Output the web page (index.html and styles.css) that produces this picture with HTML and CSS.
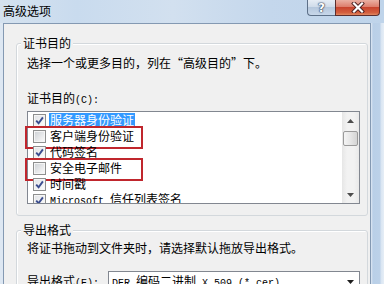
FILE: index.html
```html
<!DOCTYPE html>
<html lang="zh-CN">
<head>
<meta charset="utf-8">
<title>高级选项</title>
<link rel="stylesheet" href="styles.css">
</head>
<body>
<div class="titlebar">
  <span class="title">高级选项</span>
  <div class="caption">
    <div class="cbtn help">?</div>
    <div class="cbtn close">
      <svg width="14" height="11" viewBox="0 0 14 11">
        <path d="M3 1.5 L11 9.5 M11 1.5 L3 9.5" stroke="#4a2020" stroke-width="4" stroke-linecap="square"/>
        <path d="M3 1.5 L11 9.5 M11 1.5 L3 9.5" stroke="#fff" stroke-width="2.2" stroke-linecap="square"/>
      </svg>
    </div>
  </div>
</div>
<div class="frame">
  <div class="edge-left"></div>
  <div class="client">
    <fieldset class="group g1">
      <legend>证书目的</legend>
      <p class="desc">选择一个或更多目的，列在“高级目的”下。</p>
      <p class="label">证书目的<span class="lat">(<u>C</u>):</span></p>
      <div class="listbox">
        <div class="items">
          <div class="row"><span class="cb on"><svg viewBox="0 0 9 9" width="9" height="9"><path d="M1.2 4.6 L3.6 7.2 L7.9 1.4" fill="none" stroke="#3b4d8f" stroke-width="1.9"/></svg></span><span class="txt sel">服务器身份验证</span></div>
          <div class="row marked"><span class="cb"></span><span class="txt">客户端身份验证</span></div>
          <div class="row"><span class="cb on"><svg viewBox="0 0 9 9" width="9" height="9"><path d="M1.2 4.6 L3.6 7.2 L7.9 1.4" fill="none" stroke="#3b4d8f" stroke-width="1.9"/></svg></span><span class="txt">代码签名</span></div>
          <div class="row marked"><span class="cb"></span><span class="txt">安全电子邮件</span></div>
          <div class="row"><span class="cb on"><svg viewBox="0 0 9 9" width="9" height="9"><path d="M1.2 4.6 L3.6 7.2 L7.9 1.4" fill="none" stroke="#3b4d8f" stroke-width="1.9"/></svg></span><span class="txt">时间戳</span></div>
          <div class="row"><span class="cb on"><svg viewBox="0 0 9 9" width="9" height="9"><path d="M1.2 4.6 L3.6 7.2 L7.9 1.4" fill="none" stroke="#3b4d8f" stroke-width="1.9"/></svg></span><span class="txt"><span class="lat">Microsoft </span>信任列表签名</span></div>
        </div>
        <div class="vscroll">
          <div class="sbtn"><svg width="7" height="4" viewBox="0 0 7 4"><path d="M0 4 L3.5 0 L7 4 Z" fill="#4d4d4d"/></svg></div>
          <div class="thumb"></div>
          <div class="track"></div>
          <div class="sbtn"><svg width="7" height="4" viewBox="0 0 7 4"><path d="M0 0 L7 0 L3.5 4 Z" fill="#4d4d4d"/></svg></div>
        </div>
      </div>
    </fieldset>
    <fieldset class="group g2">
      <legend>导出格式</legend>
      <p class="desc2">将证书拖动到文件夹时，请选择默认拖放导出格式。</p>
      <div class="fmt-row">
        <span class="label2">导出格式<span class="lat">(<u>E</u>):</span></span>
        <div class="combo">
          <span class="ctext"><span class="lat">DER </span>编码二进制<span class="lat"> X.509 (*.cer)</span></span>
          <svg class="carrow" width="7" height="4" viewBox="0 0 7 4"><path d="M0 0 L7 0 L3.5 4 Z" fill="#1e1e1e"/></svg>
        </div>
      </div>
    </fieldset>
  </div>
  <div class="edge-right"></div>
</div>
</body>
</html>
```

FILE: styles.css
```css
* { box-sizing: border-box; }
html, body { margin: 0; padding: 0; }
body {
  width: 384px;
  height: 284px;
  overflow: hidden;
  background: #c6d8ec;
  font: 12px/14px "Noto Sans CJK SC", sans-serif;
  color: #000;
}
p { margin: 0; }
u { text-decoration: none; }

.titlebar {
  height: 23px;
  display: flex;
  justify-content: space-between;
  align-items: flex-start;
  background: linear-gradient(90deg, #d5e2ef 0%, #c9dbee 20%, #d2e0ef 45%, #c4d7ec 70%, #bfd4ea 100%);
}
.title { padding: 4px 0 0 3px; line-height: 14px; color: #000; }
.caption { display: flex; margin-right: 4px; }
.cbtn { height: 16px; display: flex; align-items: center; justify-content: center; }
.help {
  width: 28px;
  border: 1px solid #5d7088;
  border-top: none;
  border-right: none;
  border-radius: 0 0 0 4px;
  background: linear-gradient(#e6edf5, #d0dcea 45%, #b6c8dd 50%, #c7d7ea);
  color: #fff;
  font: bold 12px/14px "DejaVu Sans", sans-serif;
  text-shadow: 0 0 1px #2b3d58, 0 0 1px #2b3d58, 0 0 2px #2b3d58;
}
.close {
  width: 45px;
  border: 1px solid #5b2d2d;
  border-top: none;
  border-radius: 0 0 4px 0;
  background: linear-gradient(#eab0a3, #dd7e6c 45%, #c8442e 50%, #d4603f 85%, #e08a62);
}

.frame { display: flex; height: 261px; }
.edge-left { width: 3px; background: #dde7f2; }
.edge-right {
  flex: 1;
  background: linear-gradient(90deg, #dfe8f3 0, #b9cfe7 2px, #bcd1e8 9px, #d9e5f2 10px, #e6eef6 13px);
}
.client {
  width: 368px;
  border: 1px solid #8499b2;
  border-bottom: none;
  background: #f0f0f0;
  padding: 12px 2px 0 12px;
}

.group {
  margin: 0;
  min-width: 0;
  border: 1px solid #d3d8dc;
  border-radius: 3px;
  box-shadow: inset 1px 1px 0 #fff;
  padding: 0 7px 11px 4px;
}
.group legend {
  padding: 0 2px;
  line-height: 14px;
  background: #f0f0f0;
}
.g2 { margin-top: 7px; padding-bottom: 20px; }

.desc { margin: 6px 0 0 6px; }
.label { margin: 21px 0 0 6px; }
.lat { font-family: "Liberation Mono", monospace; font-size: 10px; }

.listbox {
  margin: 3px 0 0 6px;
  width: 333px;
  height: 93px;
  border: 1px solid #828790;
  background: #fff;
  display: flex;
}
.items {
  flex: 1;
  padding-left: 5px;
  overflow-x: visible;
  overflow-y: clip;
}
.row {
  position: relative;
  height: 16px;
  display: flex;
  align-items: center;
  gap: 3px;
}
.row.marked::after {
  content: "";
  position: absolute;
  left: -8px;
  top: -2px;
  width: 114px;
  height: 19px;
  border: 2px solid #c0262d;
}
.cb {
  width: 13px;
  height: 13px;
  flex: none;
  border: 1px solid #8e8f8f;
  padding: 1px;
  background: linear-gradient(135deg, #d1d4d8, #f8f8f8) content-box, #f5f5f5;
  box-shadow: inset 0 0 0 1px #f5f5f5;
  display: flex;
  align-items: center;
  justify-content: center;
}
.cb.on { background: linear-gradient(135deg, #e3e5e8, #fafafa) content-box, #f5f5f5; }
.cb svg { display: block; }
.txt { padding: 0 1px; line-height: 14px; white-space: nowrap; }
.txt.sel { background: #3399ff; color: #fff; }

.vscroll {
  width: 17px;
  flex: none;
  display: flex;
  flex-direction: column;
  background: linear-gradient(90deg, #e6e6e6, #f2f2f2 30%, #f2f2f2 70%, #e9e9e9);
}
.sbtn { height: 17px; display: flex; align-items: center; justify-content: center; }
.thumb {
  margin: 2px 1px 0;
  height: 15px;
  border: 1px solid #9a9a9a;
  border-radius: 2px;
  background: linear-gradient(90deg, #f4f4f4, #e6e6e6 50%, #d4d4d4);
}
.track { flex: 1; }

.desc2 { margin: 4px 0 0 6px; }
.fmt-row {
  margin: 16px 0 0 6px;
  display: flex;
  justify-content: space-between;
  align-items: flex-start;
}
.label2 { margin-top: 3px; }
.combo {
  width: 252px;
  height: 22px;
  border: 1px solid #828790;
  background: #fff;
  display: flex;
  align-items: center;
  padding: 0 5px 0 3px;
}
.ctext { white-space: nowrap; }
.carrow { margin-left: auto; }
```
